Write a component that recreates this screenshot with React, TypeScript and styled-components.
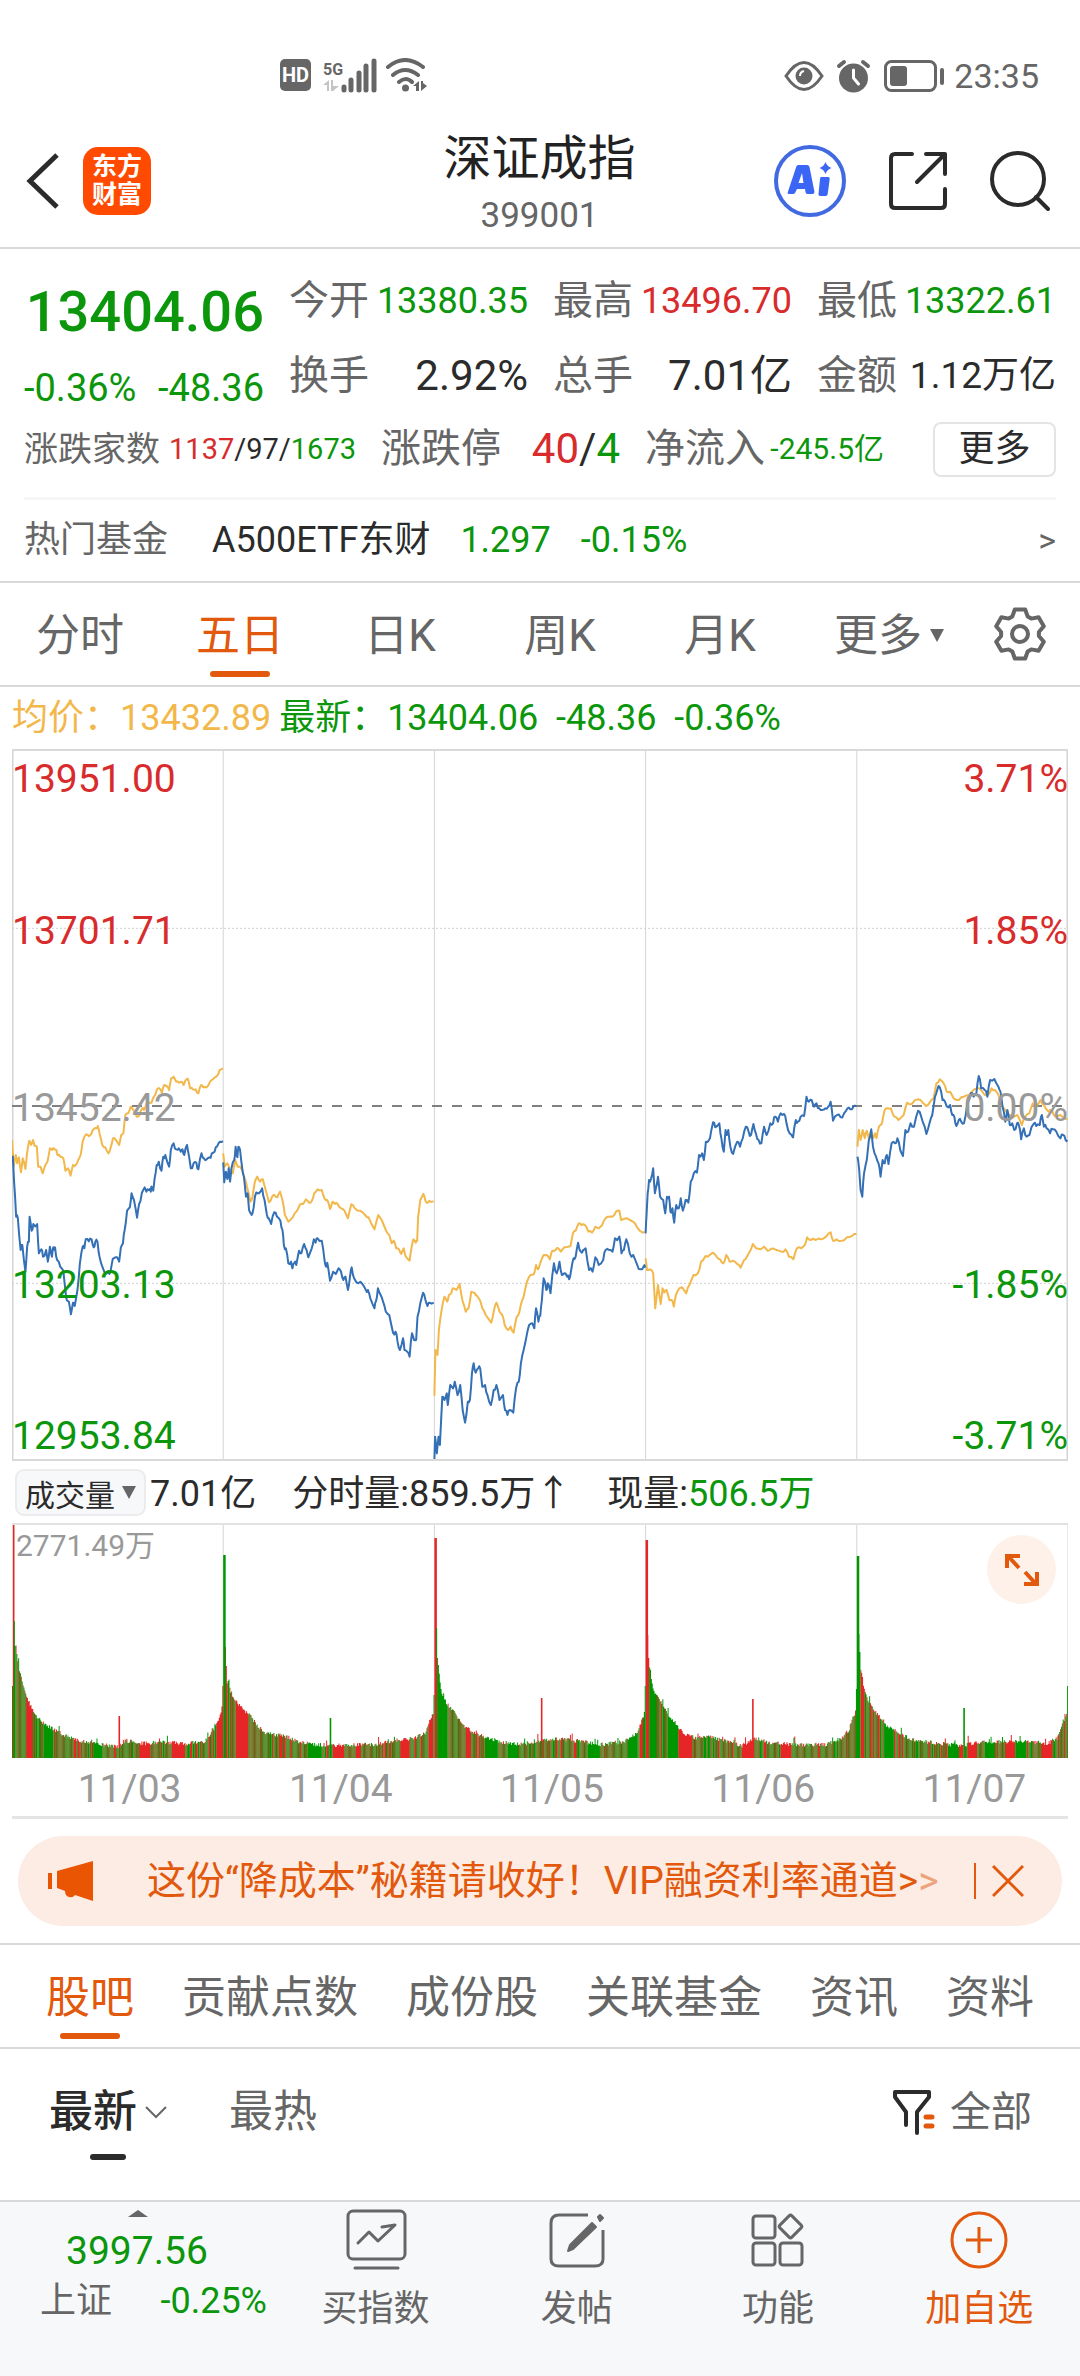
import React from 'react';
import styled, { createGlobalStyle } from 'styled-components';

const GREEN = '#0b960b';
const RED = '#d82c2c';
const INK = '#2b2b2b';
const GREY = '#666666';
const PALE = '#999999';
const ORANGE = '#e2580c';
const RULE = '#d9d9d9';
const BLUE = '#3470b5';
const AMBER = '#f2b84b';

const GlobalStyle = createGlobalStyle`
  *, *::before, *::after { box-sizing: border-box; }
  body {
    margin: 0;
    background: #fff;
    color: ${INK};
    font-family: Roboto, "Noto Sans CJK SC", sans-serif;
    font-size: 36px;
    line-height: 50px;
  }
  button, select { font: inherit; color: inherit; }
  a { color: inherit; text-decoration: none; }
  svg { display: block; flex: none; }
`;

const Page = styled.div`
  display: flex;
  flex-direction: column;
  min-height: 100vh;
  white-space: nowrap;
`;

const BareButton = styled.button`
  display: flex;
  align-items: center;
  justify-content: center;
  padding: 0;
  border: 0;
  background: none;
  cursor: pointer;
`;

const Tone = styled.span<{ $color: string }>`
  color: ${(p) => p.$color};
`;

/* status bar */

const StatusBar = styled.div`
  display: flex;
  align-items: center;
  justify-content: space-between;
  height: 112px;
  padding: 40px 41px 0 280px;
  color: ${GREY};
  font-size: 34px;
`;

const StatusGroup = styled.div`
  display: flex;
  align-items: center;
  gap: 8px;
`;

/* title bar */

const Header = styled.header`
  display: grid;
  grid-template-columns: 1fr auto 1fr;
  align-items: center;
  height: 137px;
  padding: 2px 30px 0 25px;
  border-bottom: 2px solid ${RULE};
`;

const HeaderSide = styled.div<{ $end?: boolean }>`
  display: flex;
  align-items: center;
  justify-content: ${(p) => (p.$end ? 'flex-end' : 'flex-start')};
  gap: ${(p) => (p.$end ? '42px' : '22px')};
`;

const Logo = styled.a`
  display: flex;
  flex-direction: column;
  align-items: center;
  justify-content: center;
  width: 68px;
  height: 68px;
  border-radius: 15px;
  background: #ff4a00;
  color: #fff;
  font-size: 25px;
  font-weight: 700;
  line-height: 28px;
`;

const Title = styled.h1`
  margin: 0;
  padding: 10px 0 0 4px;
  text-align: center;
  font-size: 48px;
  font-weight: 400;
  line-height: 60px;
  color: #222;
`;

const Code = styled.small`
  display: block;
  color: ${GREY};
  font-size: 35px;
  line-height: 54px;
`;

/* quote summary */

const Quote = styled.section`
  padding: 14px 24px 0;
  border-bottom: 2px solid ${RULE};
`;

const QuoteTop = styled.div`
  display: grid;
  grid-template-columns: 240px 1fr;
  gap: 25px;
`;

const PriceBlock = styled.div`
  padding-top: 12px;
  color: ${GREEN};
`;

const Price = styled.div`
  text-align: right;
  font-size: 56px;
  font-weight: 500;
  line-height: 75px;
`;

const Changes = styled.div`
  display: flex;
  align-items: flex-end;
  justify-content: space-between;
  height: 63px;
  font-size: 38px;
`;

const Metrics = styled.dl`
  display: grid;
  grid-template-columns: repeat(3, 1fr);
  column-gap: 25px;
  margin: 0;
`;

const Metric = styled.div<{ $basis?: number }>`
  display: flex;
  align-items: center;
  justify-content: space-between;
  height: 75px;
  ${(p) => (p.$basis ? `flex: 0 1 ${p.$basis}px;` : '')}
`;

const MetricName = styled.dt<{ $size?: number }>`
  color: ${GREY};
  font-size: ${(p) => p.$size ?? 40}px;
`;

const MetricValue = styled.dd<{ $color?: string; $size?: number }>`
  margin: 0;
  color: ${(p) => p.$color ?? INK};
  font-size: ${(p) => p.$size ?? 36}px;
`;

const Breadth = styled.dl`
  display: flex;
  align-items: center;
  gap: 25px;
  margin: 0;
  height: 72px;
`;

const MoreButton = styled(BareButton)`
  width: 123px;
  height: 55px;
  margin-left: auto;
  border: 2px solid #e4e4e4;
  border-radius: 8px;
`;

const FundLink = styled.a`
  display: flex;
  align-items: center;
  gap: 30px;
  height: 84px;
  margin-top: 12px;
  padding-bottom: 2px;
  border-top: 3px solid #f6f6f6;
`;

const FundName = styled.span`
  margin-left: 14px;
`;

const FundArrow = styled.span`
  margin-left: auto;
  color: ${GREY};
  font-size: 34px;
`;

/* tabs */

const TabBar = styled.nav`
  height: 104px;
  border-bottom: 2px solid ${RULE};
`;

const PeriodTabs = styled(TabBar)`
  display: grid;
  grid-template-columns: repeat(6, 4fr) 3fr;
`;

const SectionTabs = styled(TabBar)`
  display: flex;
  justify-content: space-between;
  padding: 0 46px;
`;

const Tab = styled(BareButton)<{ $active?: boolean; $dark?: boolean; $caret?: boolean }>`
  position: relative;
  height: 100%;
  padding-top: 3px;
  padding-left: ${(p) => (p.$caret ? 18 : 0)}px;
  gap: 8px;
  font-size: 44px;
  font-weight: ${(p) => (p.$active && p.$dark ? 500 : 400)};
  color: ${(p) => (p.$active ? (p.$dark ? INK : ORANGE) : GREY)};
  &::after {
    content: '';
    display: ${(p) => (p.$active ? 'block' : 'none')};
    position: absolute;
    left: 50%;
    bottom: 8px;
    width: ${(p) => (p.$dark ? 36 : 60)}px;
    height: 6px;
    border-radius: 3px;
    background: currentColor;
    transform: translateX(-50%);
  }
`;

const Caret = styled.span<{ $up?: boolean }>`
  border: ${(p) => (p.$up ? 10 : 7)}px solid transparent;
  border-top: ${(p) => (p.$up ? '0' : `13px solid ${GREY}`)};
  border-bottom: ${(p) => (p.$up ? `7px solid ${GREY}` : '0')};
`;

/* price chart */

const Legend = styled.p`
  display: flex;
  align-items: center;
  gap: 8px;
  height: 62px;
  margin: 0;
  padding: 0 0 0 12px;
  white-space: pre;
`;

const Plot = styled.div`
  position: relative;
  margin: 0 12px;
  border: 2px solid ${RULE};
  border-width: 2px 0;
`;

const PlotSvg = styled.svg`
  width: 100%;
  height: auto;
`;

const AxisLabel = styled.span<{ $color: string; $right?: boolean }>`
  position: absolute;
  ${(p) => (p.$right ? 'right: 0;' : 'left: 0;')}
  transform: translateY(-50%);
  color: ${(p) => p.$color};
  font-size: 39px;
`;

const VolumeBar = styled.div`
  display: flex;
  align-items: center;
  gap: 36px;
  height: 62px;
  padding-left: 15px;
`;

const VolumePick = styled.div`
  display: flex;
  align-items: center;
  gap: 4px;
`;

const VolumeText = styled.span`
  padding-top: 4px;
`;

const SelectBox = styled.label`
  display: flex;
  align-items: center;
  width: 131px;
  height: 47px;
  padding: 0 8px;
  border: 2px solid #ececee;
  border-radius: 9px;
  background: #f7f8fa;
  font-size: 30px;
`;

const Select = styled.select`
  flex: 1;
  min-width: 0;
  height: 43px;
  padding: 0;
  border: 0;
  background: none;
  appearance: none;
`;

const VolumeMax = styled.span`
  position: absolute;
  left: 4px;
  top: -4px;
  color: ${PALE};
  font-size: 30px;
`;

const ExpandButton = styled(BareButton)`
  position: absolute;
  right: 12px;
  top: 10px;
  width: 69px;
  height: 69px;
  border-radius: 50%;
  background: #fdf1ea;
`;

const VolumePlot = styled(Plot)`
  border-width: 2px 0 0;
  border-color: #e2e2e2;
`;

const Dates = styled.div`
  display: grid;
  grid-template-columns: repeat(5, 1fr);
  height: 61px;
  margin: 0 12px;
  border-bottom: 3px solid #e4e4e4;
  color: ${PALE};
  font-size: 39px;
  line-height: 62px;
  text-align: center;
`;

const DateCell = styled.span`
  padding-left: 24px;
`;

/* promotion */

const Promo = styled.aside`
  display: flex;
  align-items: center;
  height: 90px;
  margin: 17px 18px;
  padding: 0 38px 0 30px;
  border-radius: 45px;
  background: #fcece3;
  color: ${ORANGE};
  font-size: 39px;
`;

const PromoLink = styled.a`
  margin: 0 auto 0 53px;
`;

const PromoClose = styled(BareButton)`
  padding-left: 16px;
  border-left: 2px solid ${ORANGE};
`;

/* posts */

const SectionRule = styled.div`
  border-top: 2px solid ${RULE};
`;

const Posts = styled.section`
  display: flex;
  align-items: flex-start;
  gap: 62px;
  flex: 1;
  padding: 5px 48px 0 49px;
`;

const PostTab = styled(Tab)`
  height: 113px;
  &::after { bottom: 7px; }
`;

const FilterButton = styled(BareButton)`
  height: 116px;
  margin-left: auto;
  gap: 14px;
  color: ${GREY};
  font-size: 41px;
`;

/* bottom bar */

const BottomBar = styled.footer`
  display: grid;
  grid-template-columns: 275px repeat(4, 1fr);
  height: 176px;
  border-top: 2px solid ${RULE};
  background: #f6f8fa;
`;

const IndexCell = styled.a`
  display: flex;
  flex-direction: column;
  align-items: flex-start;
  padding: 8px 8px 0 40px;
  color: ${GREEN};
`;

const CaretRow = styled.span`
  display: flex;
  margin-left: 88px;
`;

const IndexValue = styled.span`
  margin: 9px 0 0 26px;
  font-size: 39px;
`;

const IndexRow = styled.span`
  display: flex;
  align-self: stretch;
  justify-content: space-between;
`;

const Action = styled(BareButton)<{ $accent?: boolean }>`
  flex-direction: column;
  justify-content: flex-start;
  padding-top: 6px;
  gap: 12px;
  color: ${(p) => (p.$accent ? ORANGE : GREY)};
`;

/* chart data: each run is a flat list of x,y pairs on a 3065 x 2136 plane */

type Run = { shift: number; points: string };

const priceRuns: Run[] = [
  { shift: 0, points: '37,467 41,545 47,650 52,655 60,750 65,735 74,815 79,740 84,725 86,650 92,692 97,672 108,672 113,760 120,748 125,770 134,750 139,785 145,740 151,770 155,742 160,742 166,780 175,800 184,812 190,870 194,900 200,905 206,943 212,908 217,918 225,870 232,790 240,740 245,745 249,718 258,724 266,718 272,742 277,725 283,725 290,775 298,802 310,820 318,822 325,790 330,775 340,772 346,785 351,742 357,730 362,690 369,632 377,622 382,580 389,600 398,653 404,612 412,578 420,562 425,575 432,570 438,575 440,560 445,572 449,535 455,495 461,485 469,512 474,470 480,465 491,500 496,450 504,430 512,448 519,445 525,455 530,448 535,465 543,435 549,470 554,505 562,490 570,488 576,508 585,460 592,475 600,478 608,472 615,460 623,455 630,440 640,425 647,423' },
  { shift: 0, points: '648,487 651,547 656,515 660,537 664,505 668,545 672,505 680,480 684,440 689,472 692,440 697,450 702,495 708,530 714,590 719,580 723,630 728,640 733,640 740,590 748,580 756,575 761,565 768,600 775,645 780,655 787,672 796,637 804,650 814,662 820,690 824,735 830,745 837,790 845,785 849,805 854,790 860,795 868,752 875,760 883,732 890,750 895,772 905,745 911,718 916,728 922,715 934,722 942,780 947,800 950,788 958,842 967,815 975,822 983,805 990,815 997,840 1003,830 1010,870 1016,830 1021,802 1028,835 1040,850 1052,852 1062,870 1068,870 1075,895 1087,925 1091,905 1097,865 1105,885 1112,905 1120,935 1130,945 1141,998 1148,995 1154,1025 1161,1050 1170,1015 1174,1050 1182,1055 1189,1070 1196,1000 1202,1020 1208,1020 1212,950 1220,910 1228,878 1235,900 1241,918 1247,908 1259,908' },
  { shift: 0, points: '1261,1382 1263,1310 1268,1360 1273,1310 1277,1335 1284,1190 1290,1200 1297,1180 1300,1215 1307,1155 1315,1165 1320,1145 1328,1185 1336,1155 1343,1230 1350,1268 1358,1205 1364,1200 1370,1120 1375,1090 1381,1118 1388,1105 1394,1105 1400,1160 1408,1155 1415,1185 1425,1215 1433,1170 1441,1155 1450,1200 1460,1185 1466,1230 1473,1245 1480,1230 1490,1238 1498,1165 1506,1145 1512,1090 1520,1050 1530,1000 1536,975 1545,970 1551,985 1556,925 1563,965 1568,950' },
  { shift: 1568, points: '0,950 5,900 10,835 18,870 22,850 30,880 40,790 48,820 56,785 63,825 70,820 78,830 84,838 90,810 97,775 103,770 110,728 118,755 125,750 132,745 142,810 152,815 160,772 170,795 183,780 190,750 200,750 210,755 217,715 230,710 236,760 243,750 250,718 260,760 270,765 280,790 292,808 300,800 305,803' },
  { shift: 1568, points: '306,700 309,640 312,580 316,540 322,535 328,505 333,580 337,560 342,530 348,590 357,600 363,640 368,590 374,590 378,635 384,625 389,668 395,615 402,625 408,595 414,632 422,600 430,608 437,545 446,520 455,518 461,465 470,460 475,480 481,425 490,420 496,395 502,367 508,382 520,370 526,415 533,455 538,390 542,405 546,390 552,440 560,462 572,425 580,440 588,415 597,380 605,395 612,405 619,372 626,400 634,420 642,430 650,380 657,405 668,370 676,370 682,350 690,365 698,340 708,342 715,370 724,400 734,412 742,360 748,365 756,350 766,348 773,290 780,305 788,300 795,320 802,310 810,325 818,330 828,325 836,320 843,305 850,362 862,345 872,352 882,340 892,325 900,328 910,318 918,318' },
  { shift: 1568, points: '921,470 926,510 930,570 935,590 940,520 948,480 954,420 961,388 966,440 975,470 982,490 988,530 994,480 1000,490 1006,465 1011,492 1020,430 1030,430 1037,415 1045,450 1053,468 1060,390 1068,395 1075,370 1085,380 1097,332 1106,350 1112,370 1121,402 1130,370 1138,345 1146,290 1153,268 1160,262 1168,300 1175,305 1185,322 1190,315 1196,345 1202,350 1208,378 1215,360 1222,365 1230,370 1240,310 1250,280 1258,290 1266,280 1273,228 1280,265 1290,270 1298,290 1306,240 1318,237 1330,260 1336,275 1342,320 1350,365 1356,330 1363,375 1370,370 1376,390 1384,370 1390,378 1396,418 1404,385 1412,410 1420,405 1432,372 1440,378 1450,375 1456,345 1462,380 1470,385 1480,400 1488,388 1498,395 1510,415 1518,405 1525,420 1530,420' },
];

const averageRuns: Run[] = [
  { shift: 0, points: '35,420 40,500 46,465 50,490 55,472 61,517 66,475 74,507 78,465 85,422 90,435 96,420 100,437 107,440 111,500 118,500 124,520 132,495 138,485 145,445 152,450 157,445 164,450 167,465 175,470 184,475 190,512 197,505 205,527 212,495 220,495 228,478 234,465 240,425 250,403 258,408 266,400 272,388 280,385 284,378 290,405 297,435 306,442 315,460 322,440 328,415 335,418 346,435 352,405 358,400 364,345 372,340 380,320 386,328 397,350 405,345 413,325 418,330 425,312 435,308 440,308 447,290 455,270 462,265 470,278 477,255 484,258 491,270 497,235 504,230 512,245 520,248 527,245 533,255 538,242 545,236 552,265 560,268 568,268 576,280 584,255 590,262 600,262 610,245 618,238 628,230 638,210 647,205' },
  { shift: 0, points: '648,460 652,500 660,490 668,515 676,520 683,480 690,500 697,500 703,510 712,540 717,560 727,605 733,590 740,545 747,530 755,545 763,538 770,565 781,607 790,590 797,585 805,592 813,575 820,600 827,645 837,665 850,652 860,635 870,615 880,612 888,598 897,608 905,603 912,580 922,568 934,570 942,595 950,600 958,627 965,605 972,612 980,612 990,625 1000,632 1010,655 1020,613 1030,625 1045,632 1060,645 1070,652 1087,688 1098,645 1108,660 1120,690 1130,705 1137,730 1143,722 1150,745 1158,748 1165,762 1172,745 1178,770 1189,782 1196,735 1200,718 1207,728 1211,722 1214,650 1220,600 1229,582 1235,602 1242,608 1250,605 1259,604' },
  { shift: 0, points: '1261,1187 1264,1050 1270,1065 1274,990 1282,930 1290,890 1298,905 1303,885 1310,880 1315,865 1325,870 1334,852 1342,900 1352,935 1360,925 1368,875 1377,878 1385,888 1393,900 1400,925 1410,945 1426,968 1434,930 1441,908 1450,935 1458,945 1465,975 1475,990 1482,980 1491,998 1500,950 1508,935 1516,900 1522,880 1530,845 1540,825 1550,822 1556,795 1562,808 1568,790' },
  { shift: 1568, points: '0,790 10,765 20,765 28,778 35,752 45,750 52,745 60,755 70,742 88,738 95,700 103,692 112,670 120,675 130,675 140,695 150,698 160,680 170,685 180,675 190,655 200,650 210,650 220,635 230,632 235,660 250,655 260,660 275,670 290,693 303,697' },
  { shift: 1568, points: '306,775 310,810 320,808 328,820 334,925 342,855 350,912 355,865 360,878 367,870 375,900 382,900 388,920 394,885 404,865 412,862 424,880 433,855 445,825 458,820 467,785 480,768 492,765 502,758 512,770 522,778 532,790 540,765 550,785 560,782 572,792 582,803 592,780 600,770 608,755 617,732 627,745 640,748 650,740 660,752 670,746 685,750 700,755 712,748 722,770 735,778 745,745 758,745 768,735 775,712 785,720 800,720 815,718 830,710 843,697 850,722 860,718 875,722 890,712 905,708 918,702' },
  { shift: 1568, points: '921,440 925,390 930,420 936,390 942,415 948,392 955,418 960,392 966,415 972,400 976,415 984,378 992,370 1000,330 1010,325 1018,325 1028,350 1040,360 1055,345 1065,308 1078,312 1088,300 1098,298 1110,308 1120,318 1132,305 1142,295 1150,250 1160,238 1170,248 1180,275 1190,275 1200,295 1215,300 1230,290 1245,285 1260,268 1275,265 1290,285 1300,285 1310,265 1320,270 1330,285 1340,315 1350,330 1360,345 1372,352 1385,345 1398,375 1408,350 1420,340 1430,310 1440,320 1452,300 1462,315 1475,335 1485,330 1495,350 1510,345 1522,350 1530,358' },
];

function seeded(seed: number) {
  let s = seed;
  return () => {
    s = (s * 1664525 + 1013904223) % 4294967296;
    return s / 4294967296;
  };
}

/* adds one slightly uneven tick between every two readings */
function linePath(run: Run, wobble: number, seed: number) {
  const rnd = seeded(seed);
  const pts = run.points.split(' ').map((p) => p.split(',').map(Number));
  const out: string[] = [];
  pts.forEach(([x, y], i) => {
    if (i > 0) {
      const [px, py] = pts[i - 1];
      const n = (rnd() - 0.5) * wobble;
      out.push(`${((px + x) / 2 + run.shift).toFixed(1)} ${((py + y) / 2 + n).toFixed(1)}`);
    }
    out.push(`${x + run.shift} ${y}`);
  });
  return `M${out.join('L')}`;
}

type Session = { open: [number, string][]; body: [number, number][]; lunch: [number, string]; close: [number, string]; greenBias: number };

const G = '#009600';
const R = '#e62626';

const sessions: Session[] = [
  { open: [[72, G], [233, R], [137, G], [112, G]], body: [[4, 105], [6, 92], [9, 78], [13, 64], [17, 54], [22, 44], [30, 35], [42, 28], [55, 21], [70, 16], [90, 13], [106, 11], [114, 17], [130, 14], [150, 15], [175, 14], [192, 16], [200, 26], [206, 38], [210, 52]], lunch: [42, R], close: [72, R], greenBias: 0.56 },
  { open: [[203, G], [203, G], [111, R], [92, R]], body: [[4, 76], [7, 66], [12, 56], [20, 47], [27, 42], [33, 32], [42, 24], [60, 22], [75, 16], [90, 13], [106, 12], [125, 13], [150, 13], [170, 17], [190, 19], [202, 25], [206, 34], [210, 45]], lunch: [40, G], close: [63, G], greenBias: 0.55 },
  { open: [[220, R], [220, R], [130, G], [100, R]], body: [[4, 88], [7, 62], [12, 54], [20, 44], [28, 33], [38, 25], [52, 20], [70, 15], [90, 13], [106, 16], [118, 19], [140, 17], [165, 13], [190, 16], [202, 24], [206, 34], [210, 46]], lunch: [60, R], close: [72, G], greenBias: 0.45 },
  { open: [[218, R], [218, R], [123, R], [100, R]], body: [[4, 90], [7, 68], [12, 60], [20, 46], [28, 36], [38, 24], [48, 20], [62, 21], [80, 16], [96, 12], [108, 20], [122, 15], [150, 13], [180, 13], [195, 19], [203, 28], [207, 40], [210, 48]], lunch: [59, R], close: [69, G], greenBias: 0.5 },
  { open: [[202, G], [202, G], [124, G], [106, G]], body: [[4, 88], [7, 68], [12, 54], [20, 44], [28, 33], [38, 27], [52, 19], [75, 15], [104, 12], [120, 15], [145, 16], [170, 16], [190, 14], [200, 20], [205, 34], [210, 44]], lunch: [50, G], close: [72, G], greenBias: 0.5 },
];

function volumeBars() {
  const rnd = seeded(77);
  const perDay = 240;
  const step = 211.2 / perDay;
  const paths: Record<string, string> = { [G]: '', [R]: '' };
  sessions.forEach((s, day) => {
    let run = 0;
    let mixed = true;
    let color = G;
    for (let i = 0; i < perDay; i += 1) {
      const x = i * step;
      let h = 0;
      if (run <= 0) {
        run = 4 + rnd() * 10;
        mixed = rnd() < 0.78;
        color = rnd() < s.greenBias ? G : R;
      }
      run -= 1;
      if (mixed) color = rnd() < 0.85 ? (color === G ? R : G) : color;
      let tone = color;
      if (i < s.open.length) {
        [h, tone] = s.open[i];
      } else if (i === 121) {
        [h, tone] = s.lunch;
      } else if (i >= perDay - 1) {
        [h, tone] = s.close;
      } else {
        let k = 0;
        while (k < s.body.length - 2 && s.body[k + 1][0] < x) k += 1;
        const [x0, y0] = s.body[k];
        const [x1, y1] = s.body[k + 1];
        const t = Math.min(1, Math.max(0, (x - x0) / (x1 - x0)));
        h = y0 + (y1 - y0) * t + (rnd() - 0.4) * 4;
        if (rnd() < 0.05) h += 2 + rnd() * 6;
      }
      const left = (day * 211.2 + x).toFixed(2);
      paths[tone] += `M${left} 233v-${h.toFixed(1)}h${i === 1 || i === 121 ? 1.6 : 1}v${h.toFixed(1)}z`;
    }
  });
  return paths;
}

const bars = volumeBars();

const gearPath = (() => {
  const pts: string[] = [];
  for (let k = 0; k < 6; k += 1) {
    [[-24, 19], [-12, 25], [12, 25], [24, 19]].forEach(([a, r]) => {
      const t = ((-90 + k * 60 + a) * Math.PI) / 180;
      pts.push(`${(27 + r * Math.cos(t)).toFixed(1)} ${(27 + r * Math.sin(t)).toFixed(1)}`);
    });
  }
  return `M${pts.join('L')}z`;
})();

const axis = [
  { at: '4%', price: '13951.00', pct: '3.71%', color: RED },
  { at: '25.4%', price: '13701.71', pct: '1.85%', color: RED },
  { at: '50.4%', price: '13452.42', pct: '0.00%', color: PALE },
  { at: '75.4%', price: '13203.13', pct: '-1.85%', color: GREEN },
  { at: '96.7%', price: '12953.84', pct: '-3.71%', color: GREEN },
];

const days = ['11/03', '11/04', '11/05', '11/06', '11/07'];
const dayEdges = [0, 1, 2, 3, 4, 5];

function StatusIcons() {
  return (
    <svg width="150" height="36" viewBox="0 0 150 36" fill={GREY}>
      <rect x="0" y="1" width="31" height="32" rx="5" />
      <text x="15.500" y="24" textAnchor="middle" fontSize="20" fontWeight="700" fill="#fff">HD</text>
      <text x="43" y="17" fontSize="16" fontWeight="700">5G</text>
      <path d="M43 27l6-5v11h-2v-6zM51 22h2v6h6l-6 5h-2z" fill="#c4c4c4" />
      <path d="M64 29v3M71 22v10M79 15v17M86 8v24M94 3v29" stroke={GREY} strokeWidth="5" strokeLinecap="round" fill="none" />
      <path d="M108 9q17-14 35 0M113 17q12-10 25 0M119 24q7-6 13 0" stroke={GREY} strokeWidth="4" strokeLinecap="round" fill="none" />
      <circle cx="125.500" cy="30" r="3.500" />
      <path d="M133 28l6-5v10h-3v-5zM141 23l2 0v2l4 3-6 5z" />
    </svg>
  );
}

function AlertIcons() {
  return (
    <svg width="162" height="36" viewBox="0 0 162 36" fill="none" stroke={GREY}>
      <path d="M2 18Q20-9 38 18Q20 45 2 18z" strokeWidth="3" />
      <circle cx="20" cy="18" r="8.500" fill={GREY} stroke="none" />
      <path d="M16 18q0-4 4-5" stroke="#fff" strokeWidth="2" />
      <circle cx="69.500" cy="20" r="14.500" fill={GREY} stroke="none" />
      <path d="M69.500 12v8l5 6" stroke="#fff" strokeWidth="3" strokeLinecap="round" />
      <path d="M55 8l5-4M84 8l-5-4" strokeWidth="4" strokeLinecap="round" />
      <rect x="101.500" y="3.500" width="50" height="29" rx="6" strokeWidth="3" />
      <rect x="106" y="8" width="17" height="20" rx="3" fill={GREY} stroke="none" />
      <path d="M158 12v13" strokeWidth="4" strokeLinecap="round" />
    </svg>
  );
}

export default function App() {
  return (
    <Page>
      <GlobalStyle />
      <StatusBar>
        <StatusIcons />
        <StatusGroup>
          <AlertIcons />
          <span>23:35</span>
        </StatusGroup>
      </StatusBar>

      <Header>
        <HeaderSide>
          <BareButton aria-label="返回">
            <svg width="36" height="60" viewBox="0 0 36 60" fill="none" stroke={INK} strokeWidth="5">
              <path d="M32 4L5 30l27 26" />
            </svg>
          </BareButton>
          <Logo href="#home">
            <span>东方</span>
            <span>财富</span>
          </Logo>
        </HeaderSide>
        <Title>
          深证成指
          <Code>399001</Code>
        </Title>
        <HeaderSide $end>
          <BareButton aria-label="智能助手">
            <svg width="72" height="72" viewBox="0 0 72 72" fill="#3b66f5">
              <circle cx="36" cy="36" r="34" fill="none" stroke="#4169e1" strokeWidth="4" />
              <path fillRule="evenodd" d="M24 20h9q2 0 2.500 2l5 25q0 2-2 2h-5q-2 0-2-2l-.5-3h-8l-2 4q-.5 1-2 1h-4q-2 0-1-2.500l8-24q.5-2.500 2-2.500zM28 28l-3.500 10h5z" />
              <path d="M47 32h7q2 0 1.700 2l-2 15q-.3 2-2 2h-5.500q-2 0-1.700-2l1.500-15q.2-2 1-2z" />
              <path d="M51.500 17q1.500 4.500 6 6-4.500 1.500-6 6-1.500-4.500-6-6 4.500-1.500 6-6z" />
            </svg>
          </BareButton>
          <BareButton aria-label="分享">
            <svg width="60" height="60" viewBox="0 0 60 60" fill="none" stroke={INK} strokeWidth="4" strokeLinecap="round" strokeLinejoin="round">
              <path d="M24 3H7q-4 0-4 4v46q0 4 4 4h46q4 0 4-4V38M38 3h19v20M57 3L29 31" />
            </svg>
          </BareButton>
          <BareButton aria-label="搜索">
            <svg width="60" height="60" viewBox="0 0 60 60" fill="none" stroke={INK} strokeWidth="4" strokeLinecap="round">
              <circle cx="28" cy="28" r="26" />
              <path d="M46 46l12 12" />
            </svg>
          </BareButton>
        </HeaderSide>
      </Header>

      <Quote>
        <QuoteTop>
          <PriceBlock>
            <Price>13404.06</Price>
            <Changes>
              <span>-0.36%</span>
              <span>-48.36</span>
            </Changes>
          </PriceBlock>
          <Metrics>
            <Metric><MetricName>今开</MetricName><MetricValue $color={GREEN}>13380.35</MetricValue></Metric>
            <Metric><MetricName>最高</MetricName><MetricValue $color={RED}>13496.70</MetricValue></Metric>
            <Metric><MetricName>最低</MetricName><MetricValue $color={GREEN}>13322.61</MetricValue></Metric>
            <Metric><MetricName>换手</MetricName><MetricValue $size={42}>2.92%</MetricValue></Metric>
            <Metric><MetricName>总手</MetricName><MetricValue $size={42}>7.01亿</MetricValue></Metric>
            <Metric><MetricName>金额</MetricName><MetricValue $size={37}>1.12万亿</MetricValue></Metric>
          </Metrics>
        </QuoteTop>
        <Breadth>
          <Metric $basis={332}>
            <MetricName $size={34}>涨跌家数</MetricName>
            <MetricValue $size={29}><Tone $color={RED}>1137</Tone>/97/<Tone $color={GREEN}>1673</Tone></MetricValue>
          </Metric>
          <Metric $basis={239}>
            <MetricName>涨跌停</MetricName>
            <MetricValue $size={42}><Tone $color={RED}>40</Tone>/<Tone $color={GREEN}>4</Tone></MetricValue>
          </Metric>
          <Metric $basis={239}>
            <MetricName>净流入</MetricName>
            <MetricValue $size={30} $color={GREEN}>-245.5亿</MetricValue>
          </Metric>
          <MoreButton>更多</MoreButton>
        </Breadth>
        <FundLink href="#fund">
          <Tone $color={GREY}>热门基金</Tone>
          <FundName>A500ETF东财</FundName>
          <Tone $color={GREEN}>1.297</Tone>
          <Tone $color={GREEN}>-0.15%</Tone>
          <FundArrow>&gt;</FundArrow>
        </FundLink>
      </Quote>

      <PeriodTabs>
        <Tab>分时</Tab>
        <Tab $active>五日</Tab>
        <Tab>日K</Tab>
        <Tab>周K</Tab>
        <Tab>月K</Tab>
        <Tab $caret>更多<Caret /></Tab>
        <BareButton aria-label="设置">
          <svg width="54" height="54" viewBox="0 0 54 54" fill="none" stroke={GREY} strokeWidth="4" strokeLinejoin="round">
            <path d={gearPath} />
            <circle cx="27" cy="27" r="8" />
          </svg>
        </BareButton>
      </PeriodTabs>

      <Legend>
        <Tone $color={AMBER}>均价：13432.89</Tone>
        <Tone $color={GREEN}>最新：13404.06  -48.36  -0.36%</Tone>
      </Legend>

      <Plot>
        <PlotSvg viewBox="35 -747 3065 2124" preserveAspectRatio="none" style={{ aspectRatio: '1056 / 708' }} fill="none">
          {dayEdges.map((d) => (
            <path key={d} d={`M${35 + d * 613} -747V1383`} stroke="#d4d4d4" strokeWidth={d % 5 ? 1 : 3} vectorEffect="non-scaling-stroke" />
          ))}
          <path d="M35 -215H3100M35 850H3100" stroke="#d0d0d0" strokeWidth="1" strokeDasharray="2 2" vectorEffect="non-scaling-stroke" />
          <path d="M35 318H3100" stroke="#808080" strokeWidth="2" strokeDasharray="10 10" vectorEffect="non-scaling-stroke" />
          {averageRuns.map((run, i) => (
            <path key={i} d={linePath(run, 8, 11 + i)} stroke={AMBER} strokeWidth="2" strokeLinejoin="round" vectorEffect="non-scaling-stroke" />
          ))}
          {priceRuns.map((run, i) => (
            <path key={i} d={linePath(run, 16, 31 + i)} stroke={BLUE} strokeWidth="2" strokeLinejoin="round" vectorEffect="non-scaling-stroke" />
          ))}
        </PlotSvg>
        {axis.map((a) => (
          <React.Fragment key={a.at}>
            <AxisLabel $color={a.color} style={{ top: a.at }}>{a.price}</AxisLabel>
            <AxisLabel $color={a.color} $right style={{ top: a.at }}>{a.pct}</AxisLabel>
          </React.Fragment>
        ))}
      </Plot>

      <VolumeBar>
        <VolumePick>
          <SelectBox>
            <Select aria-label="指标" defaultValue="vol">
              <option value="vol">成交量</option>
            </Select>
            <Caret />
          </SelectBox>
          <VolumeText>7.01亿</VolumeText>
        </VolumePick>
        <VolumeText>分时量:859.5万↑</VolumeText>
        <VolumeText>现量:<Tone $color={GREEN}>506.5万</Tone></VolumeText>
      </VolumeBar>

      <VolumePlot>
        <PlotSvg viewBox="0 0 1056 233">
          {dayEdges.map((d) => (
            <path key={d} d={`M${d * 211.2} 0V233`} stroke="#d4d4d4" strokeWidth="1" />
          ))}
          <path d={bars[R]} fill={R} />
          <path d={bars[G]} fill={G} />
        </PlotSvg>
        <VolumeMax>2771.49万</VolumeMax>
        <ExpandButton aria-label="全屏">
          <svg width="36" height="36" viewBox="0 0 36 36" fill="none" stroke={ORANGE} strokeWidth="4">
            <path d="M3 16V4h13M4 4l11 12M33 20v12H20M32 32L21 20" />
          </svg>
        </ExpandButton>
      </VolumePlot>

      <Dates>
        {days.map((d) => (
          <DateCell key={d}>{d}</DateCell>
        ))}
      </Dates>

      <Promo>
        <svg width="46" height="40" viewBox="0 0 46 40" fill="#ea5504">
          <path d="M0 12h4v16H0zM9 10L45 0v40l-18-6q-2 3-6 2t-4-6l-8-3z" />
        </svg>
        <PromoLink href="#vip">这份“降成本”秘籍请收好！VIP融资利率通道&gt;<Tone $color="#eda37c">&gt;</Tone></PromoLink>
        <PromoClose aria-label="关闭">
          <svg width="32" height="36" viewBox="0 0 32 36" fill="none" stroke={ORANGE} strokeWidth="3">
            <path d="M1 3l30 30M31 3L1 33" />
          </svg>
        </PromoClose>
      </Promo>

      <SectionRule />
      <SectionTabs>
        <Tab $active>股吧</Tab>
        <Tab>贡献点数</Tab>
        <Tab>成份股</Tab>
        <Tab>关联基金</Tab>
        <Tab>资讯</Tab>
        <Tab>资料</Tab>
      </SectionTabs>

      <Posts>
        <PostTab $active $dark>
          最新
          <svg width="22" height="14" viewBox="0 0 22 14" fill="none" stroke={GREY} strokeWidth="2">
            <path d="M1 2l10 10L21 2" />
          </svg>
        </PostTab>
        <PostTab>最热</PostTab>
        <FilterButton>
          <svg width="44" height="46" viewBox="0 0 44 46" fill="none" stroke={INK} strokeWidth="4" strokeLinecap="round" strokeLinejoin="round">
            <path d="M14 36V23L3 8V3h34v5L25 23v21" />
            <path d="M34 28h6M34 37h6" stroke={ORANGE} strokeWidth="5" />
          </svg>
          全部
        </FilterButton>
      </Posts>

      <BottomBar>
        <IndexCell href="#index">
          <CaretRow><Caret $up /></CaretRow>
          <IndexValue>3997.56</IndexValue>
          <IndexRow>
            <Tone $color={GREY}>上证</Tone>
            <span>-0.25%</span>
          </IndexRow>
        </IndexCell>
        <Action>
          <svg width="64" height="64" viewBox="0 0 64 64" fill="none" stroke={GREY} strokeWidth="3" strokeLinecap="round" strokeLinejoin="round">
            <rect x="4" y="3" width="57" height="48" rx="5" />
            <path d="M11 60h43M14 35l11-11 9 9 17-16-13 2" />
          </svg>
          买指数
        </Action>
        <Action>
          <svg width="64" height="64" viewBox="0 0 64 64" fill="none" stroke={GREY} strokeWidth="3" strokeLinejoin="round">
            <path d="M43 7H14q-8 0-8 8v36q0 7 8 7h36q8 0 8-7V22" />
            <path d="M47 15l4 4-23 22-5 2 2-6zM53 9l2-2 3 3-3 3z" fill={GREY} strokeWidth="2" />
          </svg>
          发帖
        </Action>
        <Action>
          <svg width="64" height="64" viewBox="0 0 64 64" fill="none" stroke={GREY} strokeWidth="3" strokeLinejoin="round">
            <rect x="7" y="8" width="22" height="22" rx="3" />
            <rect x="7" y="35" width="22" height="22" rx="3" />
            <rect x="34" y="35" width="22" height="22" rx="3" />
            <rect x="36" y="10" width="17" height="17" rx="2" transform="rotate(45 44.500 18.500)" />
          </svg>
          功能
        </Action>
        <Action $accent>
          <svg width="64" height="64" viewBox="0 0 64 64" fill="none" stroke={ORANGE} strokeWidth="3">
            <circle cx="32" cy="32" r="27" />
            <path d="M32 19v26M19 32h26" />
          </svg>
          加自选
        </Action>
      </BottomBar>
    </Page>
  );
}
